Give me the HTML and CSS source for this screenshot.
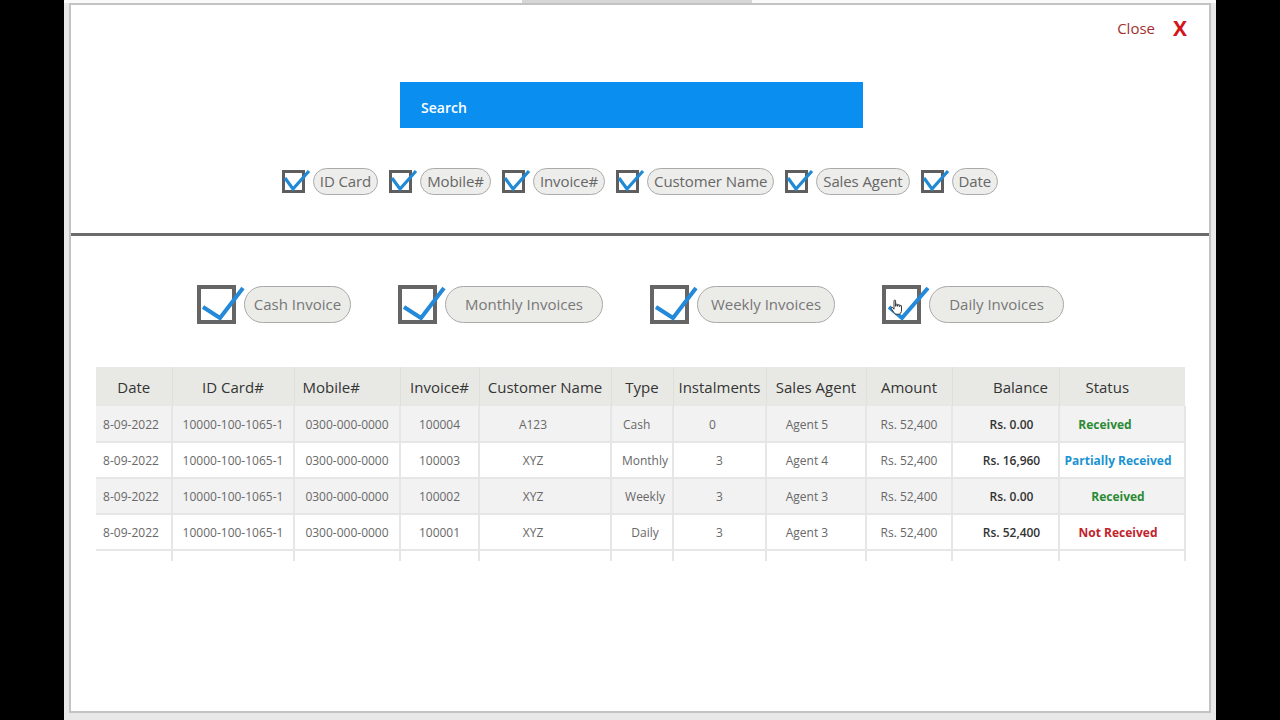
FILE: index.html
```html
<!DOCTYPE html>
<html lang="en">
<head>
<meta charset="utf-8">
<title>Invoice Search</title>
<link rel="stylesheet" href="styles.css">
</head>
<body>
<div class="screen">
  <div class="topstrip"><div class="tab"></div></div>
  <div class="panel">
    <section class="head">
      <div class="close-row">
        <span class="close-text">Close</span>
        <span class="close-x">X</span>
      </div>
      <div class="search">Search</div>
      <div class="filters">
        <label class="filter">
          <svg class="cb-s" viewBox="0 0 30 26" width="30" height="26"><rect x="1.5" y="2.5" width="20" height="20" fill="#fff" stroke="#5e5e5e" stroke-width="3"/><polyline points="3,9 11,20 27,2" fill="none" stroke="#1f8ad6" stroke-width="3.2"/></svg>
          <span class="pill">ID Card</span>
        </label>
        <label class="filter">
          <svg class="cb-s" viewBox="0 0 30 26" width="30" height="26"><rect x="1.5" y="2.5" width="20" height="20" fill="#fff" stroke="#5e5e5e" stroke-width="3"/><polyline points="3,9 11,20 27,2" fill="none" stroke="#1f8ad6" stroke-width="3.2"/></svg>
          <span class="pill">Mobile#</span>
        </label>
        <label class="filter">
          <svg class="cb-s" viewBox="0 0 30 26" width="30" height="26"><rect x="1.5" y="2.5" width="20" height="20" fill="#fff" stroke="#5e5e5e" stroke-width="3"/><polyline points="3,9 11,20 27,2" fill="none" stroke="#1f8ad6" stroke-width="3.2"/></svg>
          <span class="pill">Invoice#</span>
        </label>
        <label class="filter">
          <svg class="cb-s" viewBox="0 0 30 26" width="30" height="26"><rect x="1.5" y="2.5" width="20" height="20" fill="#fff" stroke="#5e5e5e" stroke-width="3"/><polyline points="3,9 11,20 27,2" fill="none" stroke="#1f8ad6" stroke-width="3.2"/></svg>
          <span class="pill">Customer Name</span>
        </label>
        <label class="filter">
          <svg class="cb-s" viewBox="0 0 30 26" width="30" height="26"><rect x="1.5" y="2.5" width="20" height="20" fill="#fff" stroke="#5e5e5e" stroke-width="3"/><polyline points="3,9 11,20 27,2" fill="none" stroke="#1f8ad6" stroke-width="3.2"/></svg>
          <span class="pill">Sales Agent</span>
        </label>
        <label class="filter">
          <svg class="cb-s" viewBox="0 0 30 26" width="30" height="26"><rect x="1.5" y="2.5" width="20" height="20" fill="#fff" stroke="#5e5e5e" stroke-width="3"/><polyline points="3,9 11,20 27,2" fill="none" stroke="#1f8ad6" stroke-width="3.2"/></svg>
          <span class="pill">Date</span>
        </label>
      </div>
    </section>
    <div class="separator"></div>
    <section class="body">
      <div class="types">
        <label class="type">
          <svg class="cb-l" viewBox="0 0 47 41" width="47" height="41"><rect x="2" y="3" width="35" height="35" fill="#fff" stroke="#656565" stroke-width="4"/><polyline points="6,23 23,34 46,4" fill="none" stroke="#2389d8" stroke-width="4"/></svg>
          <span class="pill-l w-cash">Cash Invoice</span>
        </label>
        <label class="type">
          <svg class="cb-l" viewBox="0 0 47 41" width="47" height="41"><rect x="2" y="3" width="35" height="35" fill="#fff" stroke="#656565" stroke-width="4"/><polyline points="6,23 23,34 46,4" fill="none" stroke="#2389d8" stroke-width="4"/></svg>
          <span class="pill-l w-monthly">Monthly Invoices</span>
        </label>
        <label class="type">
          <svg class="cb-l" viewBox="0 0 47 41" width="47" height="41"><rect x="2" y="3" width="35" height="35" fill="#fff" stroke="#656565" stroke-width="4"/><polyline points="6,23 23,34 46,4" fill="none" stroke="#2389d8" stroke-width="4"/></svg>
          <span class="pill-l w-weekly">Weekly Invoices</span>
        </label>
        <label class="type">
          <span class="cb-wrap">
            <svg class="cb-l" viewBox="0 0 47 41" width="47" height="41"><rect x="2" y="3" width="35" height="35" fill="#fff" stroke="#656565" stroke-width="4"/><polyline points="7,23 20,34 46,4" fill="none" stroke="#2389d8" stroke-width="4"/></svg>
            <svg class="cursor" viewBox="0 0 14 17" width="14" height="17"><path d="M4 1.8c0-1 1.6-1 1.6 0V7.2h.4V5.8c0-1 1.6-1 1.6 0V7.2h.4V6.3c0-1 1.6-1 1.6 0V7.6h.3V7.1c0-1 1.6-1 1.6 0V11c0 2.4-1.1 4.2-2.8 4.2H6.4c-1.1 0-1.9-.8-2.6-1.9L1.3 9.7c-.6-.9.5-1.8 1.3-1.1L4 10.2Z" fill="#fff" stroke="#222" stroke-width="0.9"/></svg>
          </span>
          <span class="pill-l w-daily">Daily Invoices</span>
        </label>
      </div>

      <table class="grid">
        <colgroup>
          <col class="c-date"><col class="c-id"><col class="c-mob"><col class="c-inv"><col class="c-name"><col class="c-type"><col class="c-inst"><col class="c-agent"><col class="c-amt"><col class="c-bal"><col class="c-status">
        </colgroup>
        <thead>
          <tr>
            <th>Date</th><th>ID Card#</th><th class="h-mob">Mobile#</th><th>Invoice#</th><th>Customer Name</th><th>Type</th><th>Instalments</th><th>Sales Agent</th><th>Amount</th><th class="h-bal">Balance</th><th class="h-status">Status</th>
          </tr>
        </thead>
        <tbody>
          <tr class="alt">
            <td class="d-date">8-09-2022</td><td>10000-100-1065-1</td><td>0300-000-0000</td><td>100004</td><td class="d-name">A123</td><td class="d-type">Cash</td><td class="d-inst">0</td><td class="d-agent">Agent 5</td><td>Rs. 52,400</td><td class="d-bal">Rs. 0.00</td><td class="d-status ok first">Received</td>
          </tr>
          <tr>
            <td class="d-date">8-09-2022</td><td>10000-100-1065-1</td><td>0300-000-0000</td><td>100003</td><td class="d-name">XYZ</td><td class="d-type2">Monthly</td><td>3</td><td class="d-agent">Agent 4</td><td>Rs. 52,400</td><td class="d-bal">Rs. 16,960</td><td class="d-status part">Partially Received</td>
          </tr>
          <tr class="alt">
            <td class="d-date">8-09-2022</td><td>10000-100-1065-1</td><td>0300-000-0000</td><td>100002</td><td class="d-name">XYZ</td><td class="d-type2">Weekly</td><td>3</td><td class="d-agent">Agent 3</td><td>Rs. 52,400</td><td class="d-bal">Rs. 0.00</td><td class="d-status ok">Received</td>
          </tr>
          <tr>
            <td class="d-date">8-09-2022</td><td>10000-100-1065-1</td><td>0300-000-0000</td><td>100001</td><td class="d-name">XYZ</td><td class="d-type2">Daily</td><td>3</td><td class="d-agent">Agent 3</td><td>Rs. 52,400</td><td class="d-bal">Rs. 52,400</td><td class="d-status bad">Not Received</td>
          </tr>
          <tr class="stub">
            <td></td><td></td><td></td><td></td><td></td><td></td><td></td><td></td><td></td><td></td><td></td>
          </tr>
        </tbody>
      </table>
    </section>
  </div>
</div>
</body>
</html>
```

FILE: styles.css
```css
* { box-sizing: border-box; }

html, body {
  margin: 0;
  padding: 0;
  height: 720px;
  background: #000;
  overflow: hidden;
}

body {
  display: flex;
  justify-content: center;
  font-family: "Open Sans", "Noto Sans", "DejaVu Sans", sans-serif;
}

.screen {
  width: 1152px;
  height: 720px;
  background: #e8e8e8;
  padding: 0 5px;
  display: flex;
  flex-direction: column;
}

.topstrip {
  height: 3px;
  background: #fafafa;
  display: flex;
  margin: 0 -5px;
  padding-left: 458px;
}

.tab {
  width: 230px;
  height: 3px;
  background: #d6d6d6;
}

.panel {
  height: 710px;
  background: #fff;
  border: 2px solid #c3c3c3;
  display: flex;
  flex-direction: column;
}

/* ---------- header section ---------- */
.head {
  height: 228px;
  display: flex;
  flex-direction: column;
}

.close-row {
  display: flex;
  justify-content: flex-end;
  align-items: center;
  gap: 18px;
  height: 20px;
  margin-top: 13px;
  padding-right: 22px;
}

.close-text {
  font-size: 15px;
  color: #a3302f;
  line-height: 20px;
}

.close-x {
  font-size: 21px;
  font-weight: 700;
  color: #d3151c;
  line-height: 20px;
}

.search {
  margin: 44px 0 0 329px;
  width: 463px;
  height: 46px;
  background: #0a8ff1;
  color: #fff;
  font-size: 14px;
  font-weight: 600;
  line-height: 46px;
  padding: 3px 0 0 21px;
}

.filters {
  margin-top: 40px;
  display: flex;
  justify-content: center;
  align-items: center;
  gap: 11px;
  height: 27px;
}

.filter {
  display: flex;
  align-items: center;
  gap: 1px;
}

.cb-s { display: block; overflow: visible; }

.pill {
  height: 27px;
  line-height: 25px;
  padding: 0 6px;
  border: 1px solid #aaa;
  border-radius: 14px;
  background: #ededeb;
  color: #676767;
  font-size: 15px;
  letter-spacing: -0.1px;
  white-space: nowrap;
}

.separator {
  height: 3px;
  background: #6b6b6b;
}

/* ---------- body section ---------- */
.body {
  display: flex;
  flex-direction: column;
}

.types {
  margin-top: 48px;
  padding-left: 126px;
  display: flex;
  align-items: center;
  gap: 47px;
  height: 41px;
}

.type {
  display: flex;
  align-items: center;
}

.cb-l { display: block; overflow: visible; }

.cb-wrap {
  position: relative;
  display: block;
}

.cursor {
  position: absolute;
  left: 8px;
  top: 15px;
  display: block;
}

.pill-l {
  height: 37px;
  line-height: 35px;
  border: 1px solid #a9a9a9;
  border-radius: 19px;
  background: #ebebe8;
  color: #777;
  font-size: 15px;
  text-align: center;
  white-space: nowrap;
}

.w-cash { width: 107px; }
.w-monthly { width: 158px; }
.w-weekly { width: 138px; }
.w-daily { width: 135px; }

/* ---------- table ---------- */
.grid {
  margin: 42px 0 0 25px;
  width: 1089px;
  table-layout: fixed;
  border-collapse: collapse;
}

.c-date { width: 76px; }
.c-id { width: 122px; }
.c-mob { width: 106px; }
.c-inv { width: 79px; }
.c-name { width: 132px; }
.c-type { width: 62px; }
.c-inst { width: 93px; }
.c-agent { width: 100px; }
.c-amt { width: 86px; }
.c-bal { width: 107px; }
.c-status { width: 126px; }

.grid th {
  height: 39px;
  background: #e8e9e4;
  border-right: 1px solid #dfe0db;
  color: #343434;
  font-size: 15px;
  font-weight: 500;
  text-align: center;
  padding: 0;
  white-space: nowrap;
}

.grid th:last-child { border-right: none; }

.h-mob { text-align: left !important; padding-left: 8px !important; }
.h-bal { padding-left: 30px !important; }
.h-status { padding-right: 30px !important; }

.grid td {
  height: 36px;
  padding: 1px 0 0 0;
  border: 2px solid #e6e6e6;
  border-top: none;
  color: #686868;
  font-size: 12px;
  text-align: center;
  white-space: nowrap;
}

.grid td:first-child { border-left: none; }

.grid tr.alt td { background: #f2f2f2; }

.d-date { padding-right: 5px !important; }
.d-name { padding-right: 24px !important; }
.d-type { text-align: left !important; padding-left: 11px !important; }
.d-type2 { padding-left: 6px !important; }
.d-inst { padding-right: 14px !important; }
.d-agent { padding-right: 18px !important; }

.d-bal {
  color: #333 !important;
  font-weight: 600;
  padding-left: 12px !important;
}

.d-status {
  font-weight: 700;
  padding-right: 8px !important;
}

.d-status.first { padding-right: 34px !important; }
.ok { color: #2b8a34 !important; }
.part { color: #1b93d2 !important; }
.bad { color: #c3222b !important; }

.grid tr.stub td {
  height: 11px;
  border-bottom: none;
  background: #fff;
}
```
